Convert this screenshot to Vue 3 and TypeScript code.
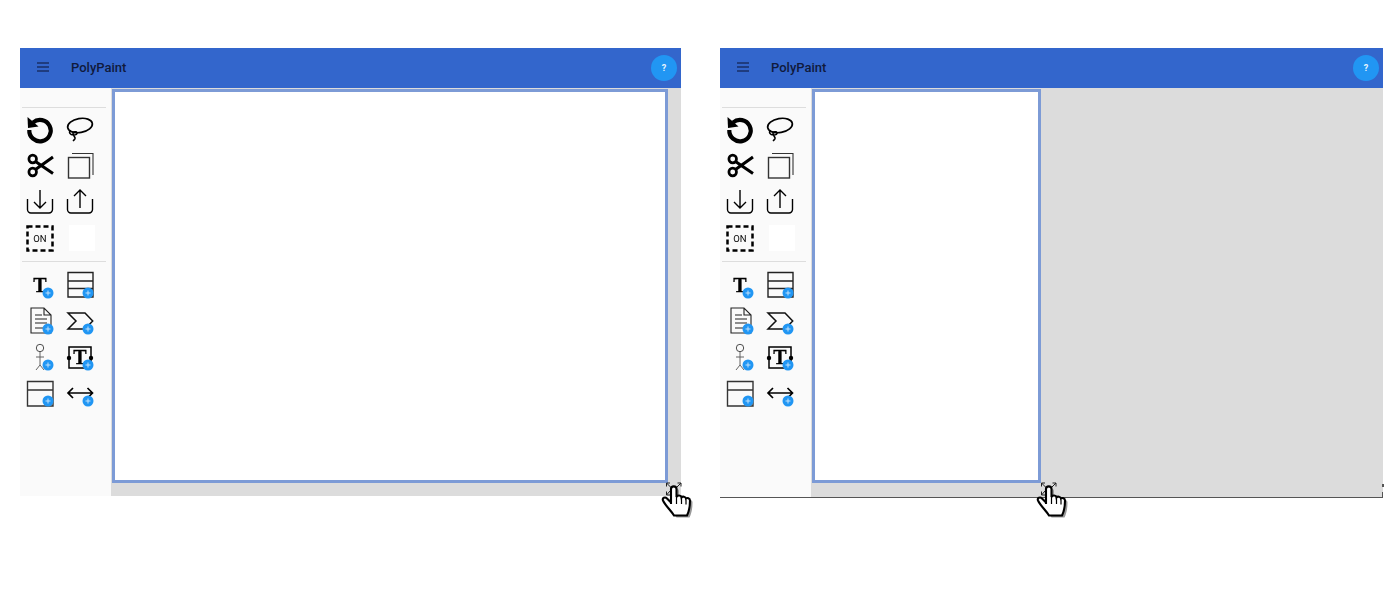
<script setup lang="ts">
interface Editor { id: number; cls: string }
const editors: Editor[] = [
  { id: 1, cls: 'first' },
  { id: 2, cls: 'second' },
]
const toolIcons = ['undo', 'lasso', 'scissors', 'copy', 'download', 'upload', 'on', 'blank']
const shapeIcons = ['text', 'classbox', 'doc', 'process', 'actor', 'textbox', 'window', 'arrow']
</script>

<template>
  <div class="page">
    <section v-for="e in editors" :key="e.id" class="editor" :class="e.cls">
      <header class="topbar">
        <svg class="menu" width="12" height="10" viewBox="0 0 12 10"><path d="M0 1h12M0 5h12M0 9h12" stroke="#1a2f66" stroke-width="1.300" fill="none" /></svg>
        <span class="title">PolyPaint</span>
        <button class="help">?</button>
      </header>
      <div class="body">
        <aside class="sidebar">
          <hr class="rule" />
          <div class="tools">
            <div v-for="name in toolIcons" :key="name" class="tool">
              <svg width="32" height="32" viewBox="0 0 32 32" fill="none" stroke="#000">
                <template v-if="name === 'undo'">
                  <path d="M9 9.500A10.700 10.700 0 1 1 5.300 17" stroke-width="4.200" />
                  <path d="M3.500 4l.5 11 10.500-1.500z" fill="#000" stroke="none" />
                </template>
                <template v-else-if="name === 'lasso'">
                  <ellipse cx="16" cy="12.500" rx="12.500" ry="7" stroke-width="1.700" transform="rotate(-10 16 12.500)" />
                  <path d="M6.500 17c-2 2.500-.5 5 3 5 2.500 0 4-1 3.500-2.500-.5-1.200-4-1-4 1 0 2.500 2.500 3 2 5-.3 1-1.500 2-2 2.500" stroke-width="1.600" />
                </template>
                <template v-else-if="name === 'scissors'">
                  <circle cx="8.700" cy="10" r="3.800" stroke-width="2.700" />
                  <circle cx="8.700" cy="23" r="3.800" stroke-width="2.700" />
                  <path d="M11.500 12.500L29 24.500M11.500 20.500L29 8" stroke-width="3" />
                </template>
                <template v-else-if="name === 'copy'">
                  <rect x="4.500" y="8.500" width="21" height="20.500" stroke="#333" stroke-width="1.400" />
                  <path d="M8 4.500h21v21.500" stroke="#333" stroke-width="1.100" />
                </template>
                <template v-else-if="name === 'download'">
                  <path d="M3.500 14v10.500a3.500 3.500 0 0 0 3.500 3.500h18a3.500 3.500 0 0 0 3.500-3.500V14" stroke-width="1.400" />
                  <path d="M16 5v18M10 17l6 6 6-6" stroke-width="1.400" />
                </template>
                <template v-else-if="name === 'upload'">
                  <path d="M3.500 14v10.500a3.500 3.500 0 0 0 3.500 3.500h18a3.500 3.500 0 0 0 3.500-3.500V14" stroke-width="1.400" />
                  <path d="M16 23V5M10 11l6-6 6 6" stroke-width="1.400" />
                </template>
                <template v-else-if="name === 'on'">
                  <rect x="3.500" y="5.500" width="25" height="24" stroke-width="2.500" stroke-dasharray="5 3" />
                  <text x="16" y="21" text-anchor="middle" class="on-label">ON</text>
                </template>
                <template v-else>
                  <rect x="5" y="4" width="26" height="26" fill="#fff" stroke="none" />
                </template>
              </svg>
            </div>
          </div>
          <hr class="rule" />
          <div class="tools shapes">
            <div v-for="name in shapeIcons" :key="name" class="tool">
              <svg width="32" height="32" viewBox="0 0 32 32" fill="none" stroke="#222">
                <template v-if="name === 'text'">
                  <text x="16" y="23" text-anchor="middle" class="big-t">T</text>
                </template>
                <template v-else-if="name === 'classbox'">
                  <path d="M4 3.500h25v24.500H4zM4 12h25M4 19.500h25" stroke-width="1.400" />
                </template>
                <template v-else-if="name === 'doc'">
                  <path d="M7 3h13l7 7v18H7zM20 3v7h7" stroke-width="1.100" />
                  <path d="M11 10h7M11 14h12M11 18h12M11 23h8" stroke-width="1" />
                </template>
                <template v-else-if="name === 'process'">
                  <path d="M4 8h17l7.700 8-7.700 8H4l8-8z" stroke="#111" stroke-width="1.500" />
                </template>
                <template v-else-if="name === 'actor'">
                  <circle cx="16" cy="7" r="3.700" stroke-width=".8" />
                  <path d="M16 11v13M12 16h8M16 24l-4 5M16 24l4 5" stroke="#555" stroke-width=".9" />
                </template>
                <template v-else-if="name === 'textbox'">
                  <rect x="5" y="6" width="22" height="21" stroke="#000" stroke-width="1.500" />
                  <circle cx="5" cy="17" r="2.200" fill="#000" stroke="none" />
                  <circle cx="27" cy="17" r="2.200" fill="#000" stroke="none" />
                  <text x="16" y="22.500" text-anchor="middle" class="big-t">T</text>
                </template>
                <template v-else-if="name === 'window'">
                  <path d="M3.500 4.500h25.500v24.500H3.500zM3.500 13h25.500" stroke="#333" stroke-width="1.400" />
                </template>
                <template v-else>
                  <path d="M4 16h24.500M9 11l-5 5 5 5M23.500 11l5 5-5 5" stroke="#000" stroke-width="1.700" />
                </template>
                <circle cx="24" cy="24" r="5.500" fill="#2196f3" stroke="none" />
                <path d="M21.500 24h5M24 21.500v5" stroke="#cfe8fc" stroke-width=".9" />
              </svg>
            </div>
          </div>
        </aside>
        <main class="workspace">
          <div class="canvas"></div>
        </main>
      </div>
      <span v-if="e.id === 2" class="tick upper"></span>
      <span v-if="e.id === 2" class="tick lower"></span>
      <svg class="cursor" width="36" height="42" viewBox="0 0 36 42">
        <path d="M11 6.500L6.500 2M6.500 2v3.500M6.500 2H10M16.500 6.500L21 2M21 2v3.500M21 2h-3.500M10 10l-3.500 4M6.500 14v-3.500M6.500 14H10" stroke="#222" stroke-width="1" fill="none" />
        <path d="M11 23V8c0-3.500 5.500-3.500 5.500 0v8c1-2 4.500-2 5 .5 1-1.500 4-1 4.500 1 1-1 4-.5 4 2 0 6-1 11-3 15H14c-3-5-8-9-11-15-1-2.500 2-4 4-2l4 4z" transform="translate(2.500 2)" fill="#999" />
        <path d="M11 23V8c0-3.500 5.500-3.500 5.500 0v8c1-2 4.500-2 5 .5 1-1.500 4-1 4.500 1 1-1 4-.5 4 2 0 6-1 11-3 15H14c-3-5-8-9-11-15-1-2.500 2-4 4-2l4 4z" fill="#fff" stroke="#000" stroke-width="2.100" />
        <path d="M16.500 16v7M21.500 17v6M26 18.500v5" stroke="#000" stroke-width="1.200" fill="none" />
      </svg>
    </section>
  </div>
</template>

<style>
html, body { background: #fff; }
</style>

<style scoped>
.page {
  display: flex;
  gap: 39px;
  padding: 48px 0 0 20px;
  height: 600px;
  box-sizing: border-box;
  font-family: Roboto, sans-serif;
  background: #fff;
}
.editor {
  position: relative;
  display: flex;
  flex-direction: column;
  height: 448px;
  width: 661px;
}
.editor.second {
  width: 663px;
  height: 450px;
  border-bottom: 1px solid #555;
  box-sizing: border-box;
}
.topbar {
  display: flex;
  align-items: center;
  height: 40px;
  flex: none;
  padding: 0 4px 0 17px;
  background: #3366cc;
  box-sizing: border-box;
}
.menu { flex: none; margin-top: -2px; }
.title {
  margin: -1px 0 0 22px;
  font-size: 13px;
  font-weight: 500;
  color: #101a3c;
}
.help {
  margin-left: auto;
  width: 26px;
  height: 26px;
  border: 0;
  padding: 0;
  border-radius: 50%;
  background: #2196f3;
  color: #e8f4fe;
  font: 700 9px Roboto, sans-serif;
}
.body { flex: 1; display: flex; min-height: 0; }
.sidebar {
  flex: none;
  width: 91px;
  background: #fafafa;
  padding-top: 19px;
  box-sizing: border-box;
}
.rule {
  margin: 0 5px 0 2px;
  border: 0;
  border-top: 1px solid #ddd;
}
.tools {
  display: grid;
  grid-template-columns: 40px 40px;
  grid-auto-rows: 36px;
  padding: 3px 0 6px;
}
.tools.shapes { padding-top: 5px; }
.tool { display: flex; align-items: center; justify-content: center; }
.tool svg { overflow: visible; will-change: transform; }
.on-label { font: 400 9.500px Roboto, sans-serif; fill: #000; stroke: none; }
.big-t { font: 700 20px "Liberation Serif", serif; fill: #000; stroke: #000; stroke-width: .3px; }
.workspace {
  flex: 1;
  background: #dcdcdc;
  padding: 1px 0 0 1px;
  min-width: 0;
}
.canvas {
  height: 394px;
  background: #fff;
  border: 3px solid #7d9bd6;
  box-sizing: border-box;
  width: 556px;
}
.second .canvas { width: 229px; }
.tick { position: absolute; right: -1px; width: 2px; background: #555; }
.tick.upper { top: 436px; height: 3px; }
.tick.lower { top: 444px; height: 5px; width: 1px; right: 0; }
.cursor { position: absolute; top: 433px; overflow: visible; }
.first .cursor { left: 640px; }
.second .cursor { left: 315px; }
</style>
